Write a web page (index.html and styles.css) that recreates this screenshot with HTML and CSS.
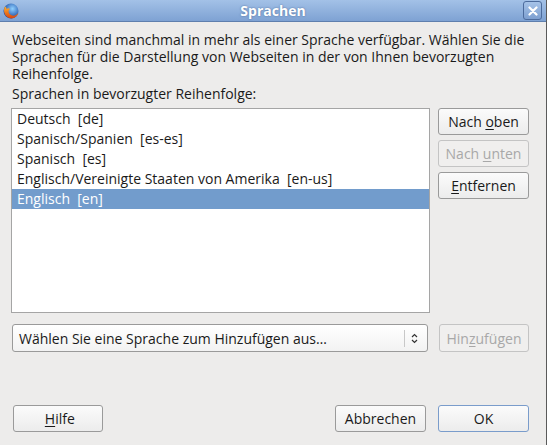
FILE: index.html
```html
<!DOCTYPE html>
<html lang="de">
<head>
<meta charset="utf-8">
<link rel="stylesheet" href="styles.css">
</head>
<body>
<div class="window">
  <div class="titlebar">
    <svg class="app-icon" width="18" height="18" viewBox="0 0 18 18">
      <defs>
        <radialGradient id="globe" cx="0.6" cy="0.35" r="0.6">
          <stop offset="0" stop-color="#8fd0ff"/>
          <stop offset="1" stop-color="#1d4fa8"/>
        </radialGradient>
        <linearGradient id="fox" x1="0" y1="0" x2="0" y2="1">
          <stop offset="0" stop-color="#ffb02e"/>
          <stop offset="1" stop-color="#d8430f"/>
        </linearGradient>
      </defs>
      <circle cx="9" cy="9" r="7.5" fill="url(#globe)"/>
      <path d="M3 4.5 C1 8 2 14 7 16 C11 17.5 15.5 15 16.5 10.5 C15 13.5 11.5 14.5 9 13 C6 11.5 6 8 8 7 C7 6 5.5 6 4.5 7 C4.5 6 4.2 5 3 4.5 Z" fill="url(#fox)"/>
    </svg>
    <div class="title">Sprachen</div>
    <div class="close">
      <svg width="10" height="10" viewBox="0 0 10 10"><path d="M1.5 1.5 L8.5 8.5 M8.5 1.5 L1.5 8.5" stroke="#fff" stroke-width="2.2" stroke-linecap="round"/></svg>
    </div>
  </div>
  <div class="content">
    <p class="intro">Webseiten sind manchmal in mehr als einer Sprache verfügbar. Wählen Sie die Sprachen für die Darstellung von Webseiten in der von Ihnen bevorzugten Reihenfolge.</p>
    <div class="label">Sprachen in bevorzugter Reihenfolge:</div>
    <div class="row">
      <div class="listbox">
        <div class="item">Deutsch&nbsp; [de]</div>
        <div class="item">Spanisch/Spanien&nbsp; [es-es]</div>
        <div class="item">Spanisch&nbsp; [es]</div>
        <div class="item">Englisch/Vereinigte Staaten von Amerika&nbsp; [en-us]</div>
        <div class="item selected">Englisch&nbsp; [en]</div>
      </div>
      <div class="side">
        <button class="btn">Nach <u>o</u>ben</button>
        <button class="btn disabled">Nach <u>u</u>nten</button>
        <button class="btn"><u>E</u>ntfernen</button>
      </div>
    </div>
    <div class="row addrow">
      <div class="select">
        <span class="select-text">Wählen Sie eine Sprache zum Hinzufügen aus…</span>
        <span class="sep"></span>
        <svg class="arrows" width="7" height="11" viewBox="0 0 7 11"><path d="M1 4 L3.5 1.5 L6 4 M1 7 L3.5 9.5 L6 7" fill="none" stroke="#333" stroke-width="1.2"/></svg>
      </div>
      <button class="btn tall disabled">Hin<u>z</u>ufügen</button>
    </div>
    <div class="footer">
      <button class="btn">&nbsp;<u>H</u>ilfe</button>
      <div class="footer-right">
        <button class="btn wide">Abbrechen</button>
        <button class="btn wide default">OK</button>
      </div>
    </div>
  </div>
</div>
</body>
</html>
```
FILE: styles.css
```css
html, body {
  margin: 0;
  padding: 0;
}
body {
  width: 547px;
  height: 445px;
  overflow: hidden;
  background: #edeceb;
  font-family: "Open Sans", "DejaVu Sans", sans-serif;
  font-size: 14px;
  color: #1a1a1a;
}
.window {
  width: 546px;
  height: 445px;
  border-right: 1px solid #5a5a5a;
  display: flex;
  flex-direction: column;
}
.titlebar {
  height: 21px;
  flex: none;
  background: linear-gradient(#a3c1e7, #7ea2d3);
  border-bottom: 1px solid #5f7fae;
  display: flex;
  align-items: center;
  position: relative;
}
.app-icon {
  margin-left: 2px;
}
.title {
  position: absolute;
  left: 0;
  right: 0;
  top: 0;
  line-height: 21px;
  text-align: center;
  color: #fff;
  font-weight: bold;
  font-size: 14px;
  text-shadow: 0 0 2px #4a6a9a;
  pointer-events: none;
}
.close {
  margin-left: auto;
  margin-right: 4px;
  width: 17px;
  height: 17px;
  border: 1px solid #4c6b9c;
  border-radius: 3px;
  background: linear-gradient(#a6c3e8, #7d9fd0);
  display: flex;
  align-items: center;
  justify-content: center;
}
.content {
  padding: 9px 17px 0 11px;
  display: flex;
  flex-direction: column;
}
.intro {
  margin: 0 0 0 1px;
  line-height: 17px;
}
.label {
  margin: 3px 0 0 1px;
  line-height: 17px;
}
.row {
  display: flex;
  align-items: flex-start;
  margin-top: 6px;
}
.listbox {
  box-sizing: border-box;
  width: 419px;
  height: 205px;
  background: #fff;
  border: 1px solid #a5a5a5;
}
.item {
  height: 20px;
  line-height: 20px;
  padding-left: 5px;
  white-space: nowrap;
}
.item.selected {
  background: #729ccc;
  color: #fff;
}
.side {
  margin-left: 8px;
  display: flex;
  flex-direction: column;
  gap: 5px;
}
.btn {
  box-sizing: border-box;
  font-family: inherit;
  font-size: 14px;
  color: #1a1a1a;
  width: 91px;
  height: 27px;
  padding: 0;
  border: 1px solid #9a9a9a;
  border-radius: 3px;
  background: linear-gradient(#fbfbfb, #ececec);
}
.btn u {
  text-decoration-thickness: 1px;
  text-underline-offset: 2px;
}
.btn.disabled {
  color: #a8a8a8;
  border-color: #c4c4c4;
  background: #f0efee;
}
.btn.default {
  border-color: #7a9ccb;
}
.btn.tall {
  width: 90px;
  height: 28px;
}
.addrow {
  margin-top: 11px;
  align-items: center;
}
.select {
  box-sizing: border-box;
  margin-left: 1px;
  width: 416px;
  height: 28px;
  border: 1px solid #9a9a9a;
  border-radius: 3px;
  background: linear-gradient(#ffffff, #f2f2f2);
  display: flex;
  align-items: center;
  margin-right: 11px;
}
.select-text {
  padding-left: 6px;
  flex: 1;
}
.sep {
  width: 1px;
  height: 17px;
  background: #c8c8c8;
}
.arrows {
  margin: 0 9px 0 6px;
}
.footer {
  margin-top: 53px;
  display: flex;
  padding-left: 2px;
}
.footer .btn {
  width: 90px;
}
.footer-right {
  margin-left: auto;
  display: flex;
  gap: 12px;
}
.footer-right .btn.wide {
  width: 91px;
}
```
